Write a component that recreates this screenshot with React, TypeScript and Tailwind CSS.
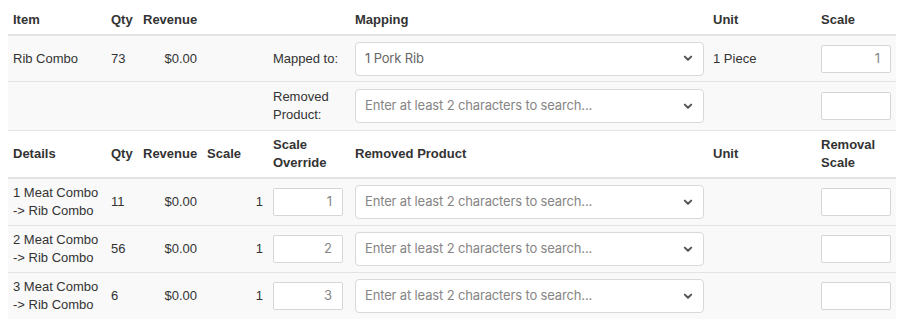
import React from "react";

const COLS = "grid grid-cols-[98px_32px_64px_66px_82px_358px_108px_80px]";
const SYS = { fontFamily: "Inter, 'Liberation Sans', sans-serif" };

function Chevron() {
  return (
    <svg width="10" height="7" viewBox="0 0 10 7" className="shrink-0">
      <path d="M1.8 1.6 L5 4.8 L8.2 1.6" fill="none" stroke="#555" strokeWidth="2" strokeLinecap="round" strokeLinejoin="round" />
    </svg>
  );
}

function Select({ value, placeholder }: { value?: string; placeholder?: string }) {
  return (
    <div
      className="h-[34px] w-[349px] rounded-[4px] border border-[#d9d9d9] bg-white flex items-center pl-[9px] pr-[10px] text-[13px] tracking-[-0.15px]"
      style={SYS}
    >
      <span className={value ? "flex-1 text-[#666]" : "flex-1 text-[#858585]"}>{value ?? placeholder}</span>
      <Chevron />
    </div>
  );
}

function NumInput({ value }: { value?: string }) {
  return (
    <div
      className="h-[28px] w-[70px] rounded-[2px] border border-[#d6d6d6] bg-white flex items-center justify-end px-[10px] text-[13px] text-[#858585]"
      style={SYS}
    >
      {value}
    </div>
  );
}

const cell = "px-[5px]";

function DetailRow({ n, qty, ov, last }: { n: string; qty: string; ov: string; last?: boolean }) {
  return (
    <div className={`${COLS} h-[46px] items-center bg-[#f9f9f9] ${last ? "" : "border-b border-[#e3e3e3] box-content"}`}>
      <div className={`${cell} leading-[18px]`}>
        {n} Meat Combo
        <br />
        -&gt; Rib Combo
      </div>
      <div className={cell}>{qty}</div>
      <div className={`${cell} text-right`}>$0.00</div>
      <div className={`${cell} text-right`}>1</div>
      <div className={cell}>
        <NumInput value={ov} />
      </div>
      <div className={cell}>
        <Select placeholder="Enter at least 2 characters to search..." />
      </div>
      <div className={cell}></div>
      <div className={cell}>
        <NumInput />
      </div>
    </div>
  );
}

export default function App() {
  return (
    <div
      className="w-[902px] h-[327px] bg-white text-[13px] text-[#333] pt-[6px]"
      style={{ fontFamily: "'Liberation Sans', Arial, sans-serif" }}
    >
      <div className="ml-[8px] w-[888px]">
        <div className={`${COLS} h-[28px] items-center font-bold border-b-2 border-[#e3e3e3] box-content`}>
          <div className={cell}>Item</div>
          <div className={cell}>Qty</div>
          <div className={cell}>Revenue</div>
          <div className={cell}></div>
          <div className={cell}></div>
          <div className={cell}>Mapping</div>
          <div className={cell}>Unit</div>
          <div className={cell}>Scale</div>
        </div>
        <div className={`${COLS} h-[45px] items-center bg-[#f9f9f9] border-b border-[#e3e3e3] box-content`}>
          <div className={cell}>Rib Combo</div>
          <div className={cell}>73</div>
          <div className={`${cell} text-right`}>$0.00</div>
          <div className={cell}></div>
          <div className={cell}>Mapped to:</div>
          <div className={cell}>
            <Select value="1 Pork Rib" />
          </div>
          <div className={cell}>1 Piece</div>
          <div className={cell}>
            <NumInput value="1" />
          </div>
        </div>
        <div className={`${COLS} h-[48px] items-center bg-[#f9f9f9] border-b border-[#e3e3e3] box-content`}>
          <div className={cell}></div>
          <div className={cell}></div>
          <div className={cell}></div>
          <div className={cell}></div>
          <div className={`${cell} leading-[18px]`}>
            Removed
            <br />
            Product:
          </div>
          <div className={cell}>
            <Select placeholder="Enter at least 2 characters to search..." />
          </div>
          <div className={cell}></div>
          <div className={cell}>
            <NumInput />
          </div>
        </div>
        <div className={`${COLS} h-[46px] items-center font-bold leading-[18px] border-b-2 border-[#e3e3e3] box-content`}>
          <div className={cell}>Details</div>
          <div className={cell}>Qty</div>
          <div className={cell}>Revenue</div>
          <div className={cell}>Scale</div>
          <div className={cell}>
            Scale
            <br />
            Override
          </div>
          <div className={cell}>Removed Product</div>
          <div className={cell}>Unit</div>
          <div className={cell}>
            Removal
            <br />
            Scale
          </div>
        </div>
        <DetailRow n="1" qty="11" ov="1" />
        <DetailRow n="2" qty="56" ov="2" />
        <DetailRow n="3" qty="6" ov="3" last />
      </div>
    </div>
  );
}
